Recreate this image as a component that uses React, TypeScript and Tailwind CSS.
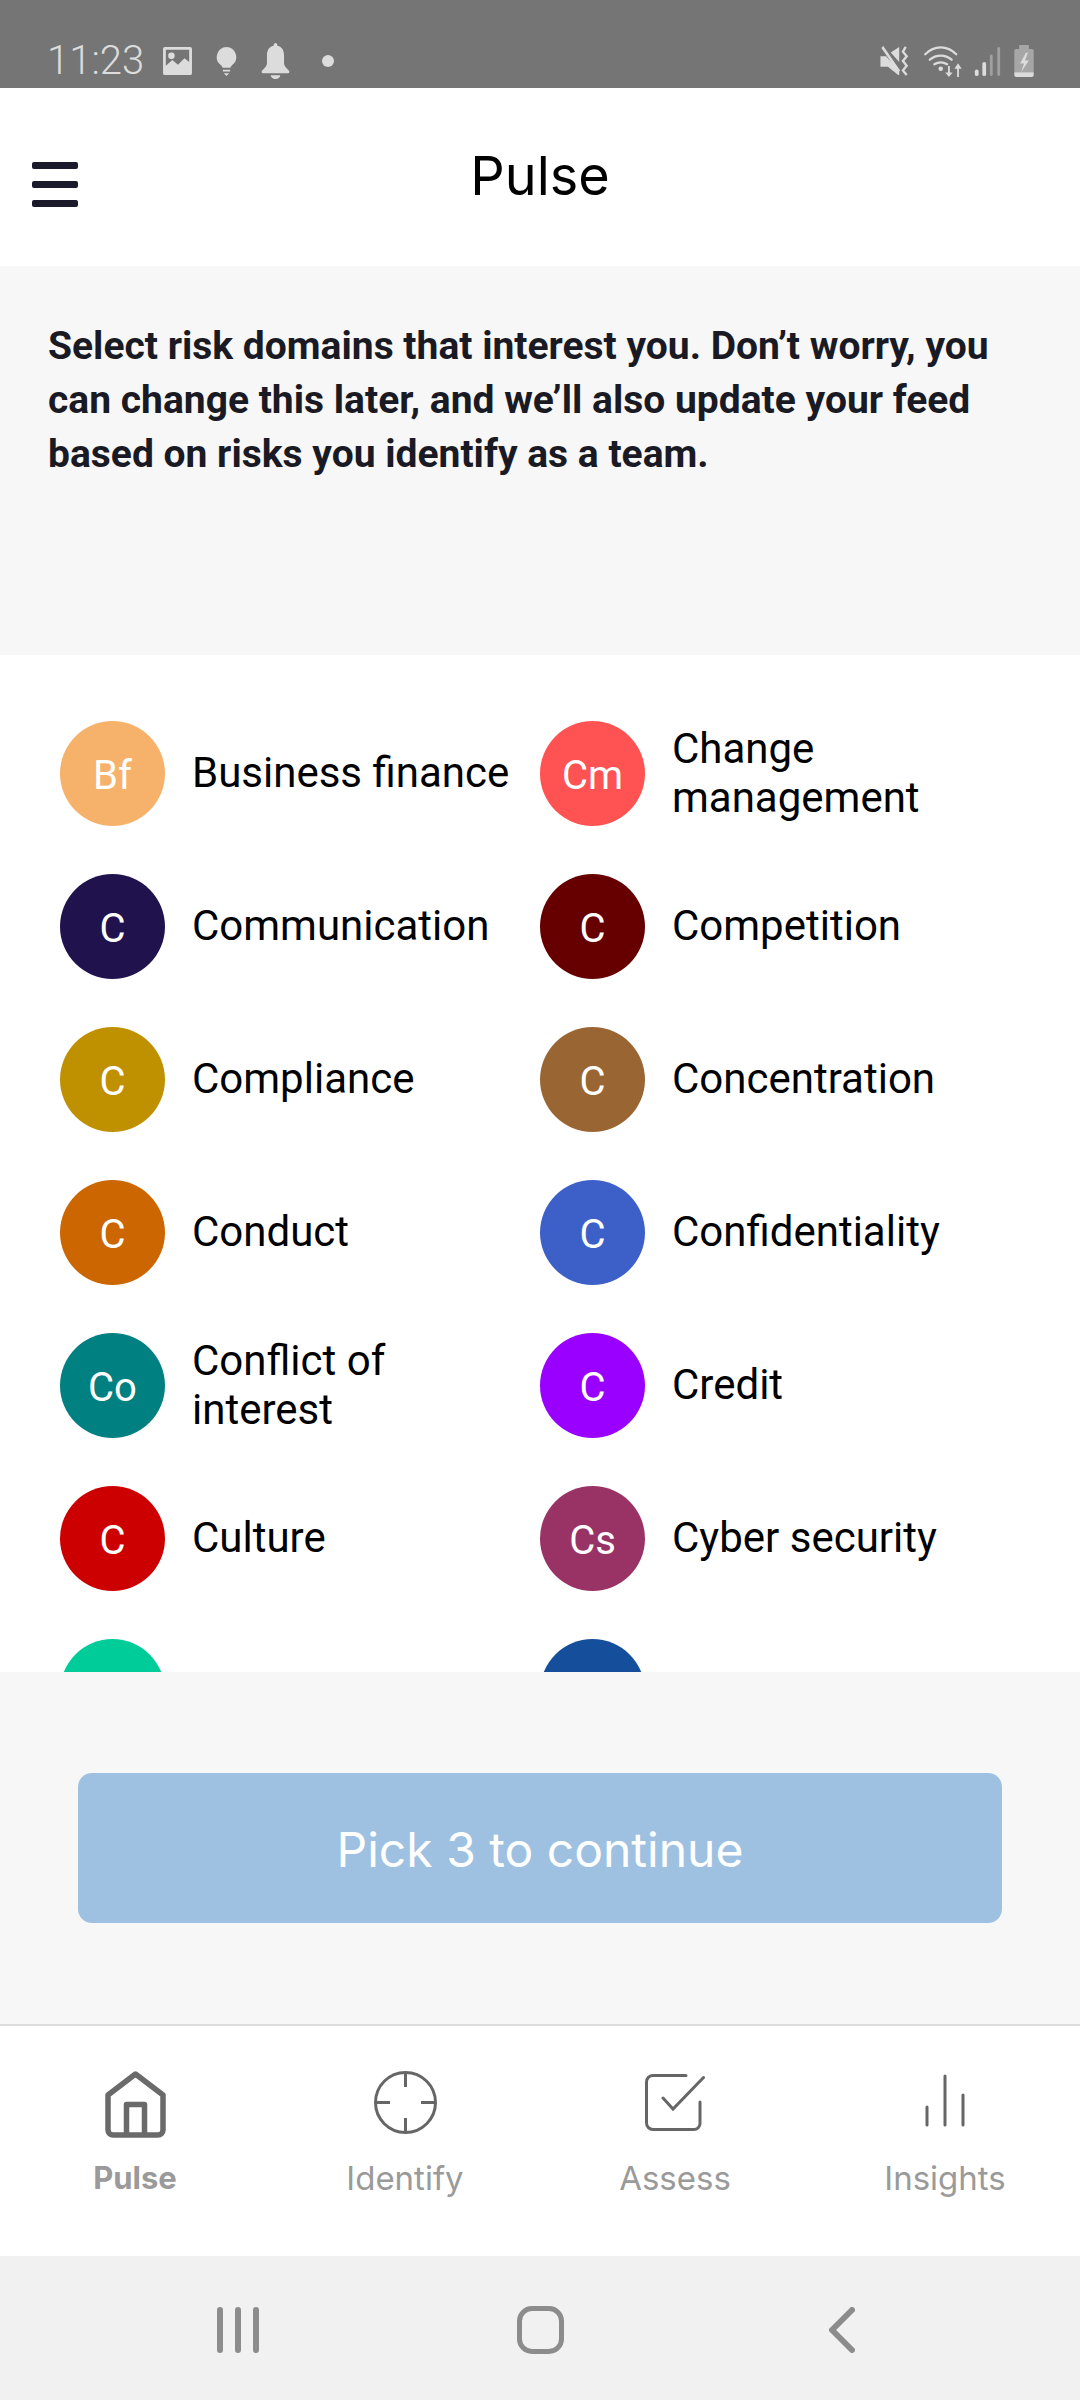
import { ReactNode } from 'react'

const domains = [
  { tag: 'Bf', name: 'Business finance', color: 'bg-[#f6b26b]' },
  { tag: 'Cm', name: 'Change management', color: 'bg-[#ff5252]' },
  { tag: 'C', name: 'Communication', color: 'bg-[#20124d]' },
  { tag: 'C', name: 'Competition', color: 'bg-[#660000]' },
  { tag: 'C', name: 'Compliance', color: 'bg-[#bf9000]' },
  { tag: 'C', name: 'Concentration', color: 'bg-[#996633]' },
  { tag: 'C', name: 'Conduct', color: 'bg-[#cc6600]' },
  { tag: 'C', name: 'Confidentiality', color: 'bg-[#3d5fc8]' },
  { tag: 'Co', name: 'Conflict of interest', color: 'bg-[#008080]' },
  { tag: 'C', name: 'Credit', color: 'bg-[#9900ff]' },
  { tag: 'C', name: 'Culture', color: 'bg-[#cc0000]' },
  { tag: 'Cs', name: 'Cyber security', color: 'bg-[#993366]' },
  { tag: '', name: '', color: 'bg-[#00cc99]' },
  { tag: '', name: '', color: 'bg-[#154f9c]' },
]

function StatusBar() {
  return (
    <div className="flex h-[88px] shrink-0 items-center justify-between bg-[#757575] pl-[47px] pr-[46px] pt-[34px] text-[#dcdcdc]">
      <div className="flex items-center">
        <span className="w-[97px] font-['Roboto',sans-serif] text-[40px] leading-[44px] font-light">11:23</span>
        <svg className="ml-[19px]" width="29" height="28" viewBox="0 0 31 30">
          <path fill="#dcdcdc" fillRule="evenodd" d="M2 0h27a2 2 0 0 1 2 2v26a2 2 0 0 1-2 2H2a2 2 0 0 1-2-2V2a2 2 0 0 1 2-2zM3 3v17l7-6 6 5 7-7 5 4V3zM9 6a3.500 3.500 0 1 1 0 7 3.500 3.500 0 0 1 0-7z" />
        </svg>
        <svg className="ml-[24px]" width="21" height="29" viewBox="0 0 22 32">
          <path fill="#dcdcdc" d="M11 0a11 11 0 0 1 6 20c-1 1-1 2-2 3H7c-1-1-1-2-2-3A11 11 0 0 1 11 0zM7 25h8v2H7zM8 29h6l-3 3z" />
        </svg>
        <svg className="ml-[24px]" width="29" height="36" viewBox="0 0 30 38">
          <path fill="#dcdcdc" d="M15 0c1 0 2 1 2 3 5 1 7 5 7 10v8c0 3 2 5 5 8 1 1 1 3-1 3H2c-2 0-2-2-1-3 3-3 5-5 5-8v-8c0-5 2-9 7-10 0-2 1-3 2-3zM10 34h10c0 2-2 4-5 4s-5-2-5-4z" />
        </svg>
        <span className="ml-[32px] h-[12px] w-[12px] rounded-full bg-[#dcdcdc]" />
      </div>
      <div className="flex items-center">
        <svg width="31" height="30" viewBox="0 0 32 32">
          <path fill="#dcdcdc" d="M1 11h5l1 0 14 16v4l-1 0-11-9H1zM21 1v16L12 7zM2 2l2-2 18 26-2 2z" />
          <path fill="none" stroke="#dcdcdc" strokeWidth="2.500" d="M28 1l-3 5 4 5-4 5 4 5-4 5 4 5" />
        </svg>
        <svg className="ml-[13px]" width="40" height="31" viewBox="0 0 41 34">
          <g fill="none" stroke="#dcdcdc" strokeWidth="2.500" strokeLinecap="round">
            <path d="M1 9c10-10 24-10 34 0" />
            <path d="M6 15c7-6 17-6 24 0" />
            <path d="M11 20c5-3 9-3 14 0" />
          </g>
          <circle cx="18" cy="25" r="2.500" fill="#dcdcdc" />
          <path fill="#dcdcdc" d="M26 22h2v7h3l-4 5-4-5h3zM38 34h-2v-9h-3l4-6 4 6h-3z" />
        </svg>
        <svg className="ml-[11px]" width="27" height="29" viewBox="0 0 27 31">
          <rect x="0" y="24" width="4" height="7" rx="2" fill="#dcdcdc" />
          <rect x="8" y="16" width="4" height="15" rx="2" fill="#dcdcdc" />
          <rect x="16" y="8" width="3" height="23" rx="1.500" fill="#a0a0a0" />
          <rect x="24" y="0" width="3" height="31" rx="1.500" fill="#a0a0a0" />
        </svg>
        <svg className="ml-[13px]" width="20" height="32" viewBox="0 0 20 33">
          <path fill="#a6a6a6" d="M5 0h10v4h3a2 2 0 0 1 2 2v22H0V6a2 2 0 0 1 2-2h3z" />
          <path fill="#dcdcdc" d="M0 28h20v3a2 2 0 0 1-2 2H2a2 2 0 0 1-2-2z" />
          <path fill="#dcdcdc" d="M12 8l-6 11h4l-3 9 8-12h-4l3-8z" />
        </svg>
      </div>
    </div>
  )
}

function Header() {
  return (
    <div className="relative flex h-[178px] shrink-0 items-start justify-center bg-white pt-[60px]">
      <div className="absolute left-[32px] top-[74px] flex w-[46px] flex-col gap-[12px]">
        <span className="h-[7px] rounded-[2px] bg-[#1a1a2a]" />
        <span className="h-[7px] rounded-[2px] bg-[#1a1a2a]" />
        <span className="h-[7px] rounded-[2px] bg-[#1a1a2a]" />
      </div>
      <h1 className="font-['Inter',sans-serif] text-[54px] leading-[56px] font-normal text-black">Pulse</h1>
    </div>
  )
}

function DomainRow({ tag, name, color }: { tag: string; name: string; color: string }) {
  return (
    <div className="flex h-[105px] items-center">
      <div className={`flex h-[105px] w-[105px] shrink-0 items-center justify-center rounded-full pt-[4px] text-[40px] text-white ${color}`}>
        {tag}
      </div>
      <span className="mb-[2px] ml-[27px] w-[325px] text-[42px] leading-[49px] text-black">{name}</span>
    </div>
  )
}

function NavItem({ icon, label, active }: { icon: ReactNode; label: string; active?: boolean }) {
  return (
    <div className="flex w-[270px] flex-col items-center">
      <div className="flex h-[68px] items-start justify-center">{icon}</div>
      <span className={`mt-[20px] font-['Inter',sans-serif] leading-[38px] text-[#9a9a9a] ${active ? 'text-[31px] font-bold' : 'text-[33px] font-normal'}`}>
        {label}
      </span>
    </div>
  )
}

function BottomNav() {
  return (
    <div className="flex h-[232px] shrink-0 justify-center border-t-[2px] border-[#dcdcdc] bg-white pt-[45px]">
      <NavItem
        active
        label="Pulse"
        icon={
          <svg width="61" height="67" viewBox="0 0 61 67" fill="none" stroke="#6a6a6a" strokeWidth="5.500" strokeLinejoin="round">
            <path d="M30.500 3L3 24v35a5 5 0 0 0 5 5h45a5 5 0 0 0 5-5V24z" />
            <path d="M21.500 64V33.500h18V64" />
          </svg>
        }
      />
      <NavItem
        label="Identify"
        icon={
          <svg width="63" height="63" viewBox="0 0 63 63" fill="none" stroke="#666666" strokeWidth="3">
            <circle cx="31.500" cy="31.500" r="30" />
            <path d="M31.500 2v14M31.500 47v14M2 31.500h14M47 31.500h14" />
          </svg>
        }
      />
      <NavItem
        label="Assess"
        icon={
          <svg className="mt-[3px]" width="60" height="57" viewBox="0 0 60 57" fill="none" stroke="#666666" strokeWidth="3" strokeLinecap="round">
            <path d="M41 1.500H8A6.500 6.500 0 0 0 1.500 8v41A6.500 6.500 0 0 0 8 55.500h41a6 6 0 0 0 6-6V28" />
            <path d="M18 24l10 11L58.500 3.500" />
          </svg>
        }
      />
      <NavItem
        label="Insights"
        icon={
          <svg className="mt-[3px]" width="40" height="53" viewBox="0 0 40 53" fill="none" stroke="#666666" strokeWidth="3" strokeLinecap="round">
            <path d="M2 33v18M20 2v49M38 21v30" />
          </svg>
        }
      />
    </div>
  )
}

function SoftKeys() {
  return (
    <div className="flex h-[144px] shrink-0 items-center justify-center bg-[#f1f1f1] pt-[3px]">
      <div className="flex w-[302px] justify-center gap-[12px]">
        <span className="h-[46px] w-[6px] rounded-full bg-[#8c8c8c]" />
        <span className="h-[46px] w-[6px] rounded-full bg-[#8c8c8c]" />
        <span className="h-[46px] w-[6px] rounded-full bg-[#8c8c8c]" />
      </div>
      <div className="flex w-[302px] justify-center">
        <span className="h-[48px] w-[47px] rounded-[15px] border-[5px] border-[#8c8c8c]" />
      </div>
      <div className="flex w-[302px] justify-center">
        <svg width="26" height="46" viewBox="0 0 26 46" fill="none" stroke="#8c8c8c" strokeWidth="6" strokeLinecap="round" strokeLinejoin="round">
          <path d="M23 3L3 23l20 20" />
        </svg>
      </div>
    </div>
  )
}

export default function App() {
  return (
    <div className="flex h-[2400px] w-[1080px] flex-col overflow-hidden bg-white font-['Roboto',sans-serif]">
      <StatusBar />
      <Header />
      <div className="h-[389px] shrink-0 bg-[#f7f7f7] pl-[48px] pr-[70px] pt-[53px]">
        <p className="text-[39px] leading-[54px] font-bold text-[#1a1a24]">
          Select risk domains that interest you. Don’t worry, you can change this later, and we’ll also update your feed based on risks you identify as a team.
        </p>
      </div>
      <div className="h-[1017px] shrink-0 overflow-hidden bg-white pl-[60px] pt-[66px]">
        <div className="grid grid-cols-[480px_480px] gap-y-[48px]">
          {domains.map((d, i) => (
            <DomainRow key={i} tag={d.tag} name={d.name} color={d.color} />
          ))}
        </div>
      </div>
      <div className="flex h-[352px] shrink-0 items-start justify-center bg-[#f7f7f7] pt-[101px]">
        <button
          type="button"
          className="h-[150px] w-[924px] rounded-[14px] bg-[#9ec1e1] pt-[3px] font-['Inter',sans-serif] text-[48px] text-white"
        >
          Pick 3 to continue
        </button>
      </div>
      <BottomNav />
      <SoftKeys />
    </div>
  )
}
